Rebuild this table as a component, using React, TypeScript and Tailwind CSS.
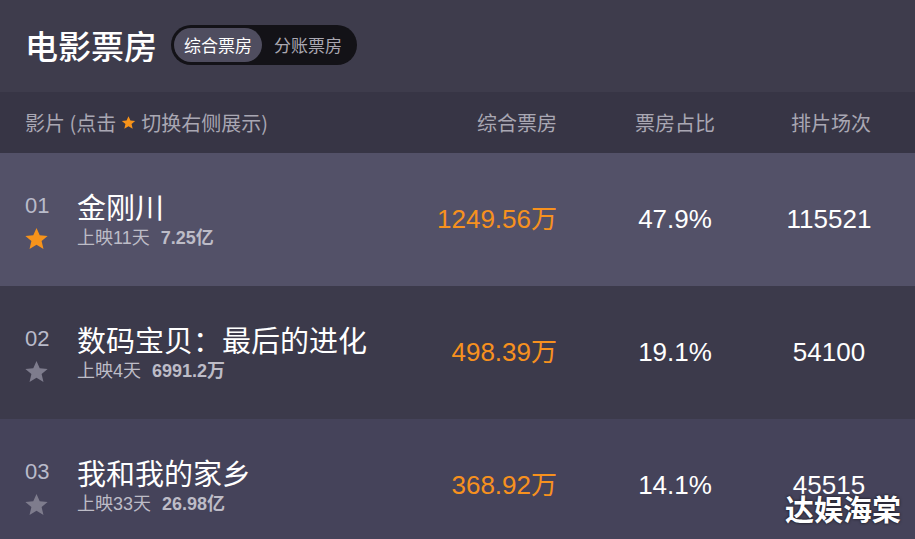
import React from 'react';

const FONT = { fontFamily: '"Liberation Sans", "Noto Sans CJK SC", sans-serif' };

type Movie = { rank: string; title: string; days: string; total: string; box: string; pct: string; shows: string; active?: boolean; bg: string };

const movies: Movie[] = [
  { rank: '01', title: '金刚川', days: '上映11天', total: '7.25亿', box: '1249.56万', pct: '47.9%', shows: '115521', active: true, bg: 'bg-[#535168]' },
  { rank: '02', title: '数码宝贝：最后的进化', days: '上映4天', total: '6991.2万', box: '498.39万', pct: '19.1%', shows: '54100', bg: 'bg-[#3c3a4b]' },
  { rank: '03', title: '我和我的家乡', days: '上映33天', total: '26.98亿', box: '368.92万', pct: '14.1%', shows: '45515', bg: 'bg-[#45435a]' },
];

const Star = ({ className }: { className: string }) => (
  <svg viewBox="0 0 24 24" className={className} fill="currentColor">
    <path d="M12 1.8l3.1 7.1 7.6.6-5.8 5 1.8 7.5L12 18l-6.7 4 1.8-7.5-5.8-5 7.6-.6z" />
  </svg>
);

const MovieRow = ({ m }: { m: Movie }) => (
  <div className={`flex items-center h-[133px] pl-[25px] pr-[6px] ${m.bg}`}>
    <div className="flex-1 grid grid-cols-[52px_1fr] items-center gap-y-[3px]">
      <span className="text-[22px] leading-[30px] text-[#b9bbca]" style={FONT}>{m.rank}</span>
      <span className="text-[29px] leading-[34px] text-white">{m.title}</span>
      <Star className={`w-[25px] h-[25px] -ml-[1px] ${m.active ? 'text-[#f7931a]' : 'text-[#7e7c8d]'}`} />
      <span className="text-[18px] leading-[24px] text-[#bdbcc7]" style={FONT}>
        {m.days}
        <span className="ml-[11px] font-semibold">{m.total}</span>
      </span>
    </div>
    <div className="w-[160px] mr-[40px] text-right text-[26px] text-[#f7911e]" style={FONT}>{m.box}</div>
    <div className="w-[156px] text-center text-[26px] text-white" style={FONT}>{m.pct}</div>
    <div className="w-[156px] pr-[4px] text-center text-[26px] text-white" style={FONT}>{m.shows}</div>
  </div>
);

export default function App() {
  return (
    <div className="relative w-[915px] h-[539px] overflow-hidden bg-[#3e3c4c]" style={{ fontFamily: '"Noto Sans CJK SC", sans-serif' }}>
      {/* Title bar */}
      <div className="h-[92px] flex items-center pl-[25px] pb-[2px]">
        <h1 className="text-[33px] text-white font-medium leading-none">电影票房</h1>
        <div className="ml-[14px] flex items-center h-[40px] rounded-full bg-[#131217] p-[3px]">
          <span className="h-[34px] px-[10px] rounded-full bg-[#4f4d5f] text-white text-[17px] flex items-center">综合票房</span>
          <span className="h-[34px] px-[12px] text-[#aaa8b2] text-[17px] flex items-center">分账票房</span>
        </div>
      </div>

      {/* Column header */}
      <div className="h-[61px] flex items-center pl-[25px] pr-[6px] bg-[#373545] text-[20px] text-[#a9a7b3]">
        <div className="flex-1 flex items-center">
          影片 (点击
          <Star className="w-[15px] h-[15px] mx-[5px] text-[#f7931a]" />
          切换右侧展示)
        </div>
        <div className="w-[160px] mr-[40px] text-right">综合票房</div>
        <div className="w-[156px] text-center">票房占比</div>
        <div className="w-[156px] text-center">排片场次</div>
      </div>

      {movies.map((m) => (
        <MovieRow key={m.rank} m={m} />
      ))}

      {/* Watermark */}
      <div className="absolute right-[14px] bottom-[16px] text-[29px] font-bold text-white leading-none [text-shadow:0_0_3px_rgba(0,0,0,0.8)]">
        达娱海棠
      </div>
    </div>
  );
}
